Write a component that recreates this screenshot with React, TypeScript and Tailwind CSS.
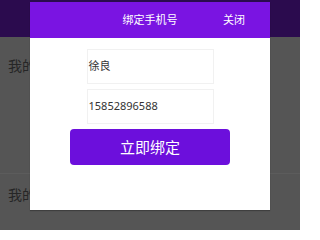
import React from 'react';

const font = { fontFamily: '"Noto Sans", "Noto Sans CJK SC", sans-serif' };

export default function App() {
  return (
    <div className="relative w-[300px] h-[230px] overflow-hidden bg-[#555555]" style={font}>
      {/* page behind the dimmed overlay */}
      <div className="h-[37px] bg-[#2b0b4e]" />
      <div className="flex flex-col">
        <div className="h-[56px] flex items-center px-2 text-[14px] text-[#262626]">我的信息</div>
        <div className="h-[81px] border-b border-[#5c5c5c]" />
        <div className="h-[40px] flex items-center px-2 text-[14px] text-[#262626]">我的订单</div>
      </div>

      {/* modal */}
      <div className="absolute left-[30px] top-[2px] w-[240px] h-[208px] bg-white flex flex-col shadow-[0_1px_1px_rgba(0,0,0,0.25)]">
        <div className="h-[36px] bg-[#7a14e2] flex items-center relative">
          <span className="flex-1 text-center text-[11px] text-white">绑定手机号</span>
          <span className="absolute right-[25px] text-[11px] text-white">关闭</span>
        </div>
        <div className="flex flex-col items-center pt-[11px]">
          <div className="w-[127px] h-[35px] border border-[#f1f1f1] flex items-center px-[1px] text-[11px] text-[#333333]">徐良</div>
          <div className="mt-[5px] w-[127px] h-[35px] border border-[#f1f1f1] flex items-center px-[1px] text-[11px] text-[#333333]">15852896588</div>
          <button className="mt-[5px] w-[160px] h-[36px] rounded-[4px] bg-[#6c0fdc] text-white text-[15px] flex items-center justify-center">立即绑定</button>
        </div>
      </div>
    </div>
  );
}
